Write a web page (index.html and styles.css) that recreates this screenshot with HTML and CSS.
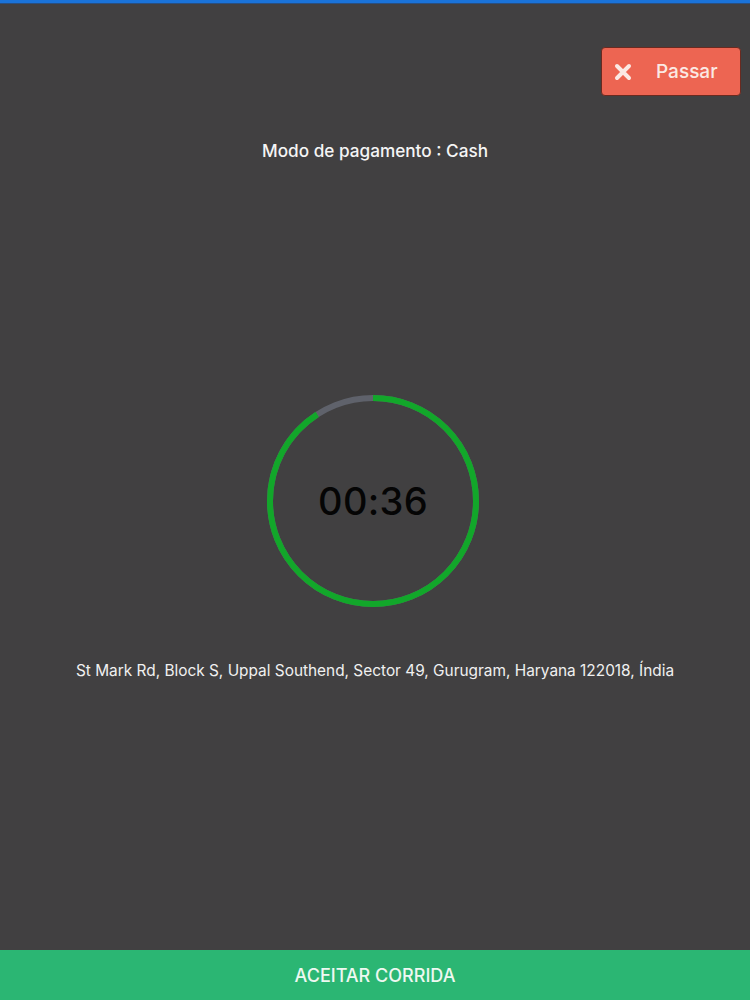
FILE: index.html
```html
<!DOCTYPE html>
<html>
<head>
<meta charset="utf-8">
<link rel="stylesheet" href="styles.css">
</head>
<body>
<div class="screen">
  <div class="topbar"></div>
  <div class="content">
    <div class="skip-row">
      <button class="skip">
        <svg class="x-icon" width="18" height="18" viewBox="0 0 18 18"><path d="M3 3 L15 15 M15 3 L3 15" stroke="#fbe9e4" stroke-width="4" stroke-linecap="round"/></svg>
        <span>Passar</span>
      </button>
    </div>
    <div class="payment">Modo de pagamento : Cash</div>
    <div class="timer">
      <svg class="ring" width="214" height="214" viewBox="0 0 214 214">
        <circle cx="107" cy="107" r="103" fill="none" stroke="#5f626b" stroke-width="6"/>
        <circle cx="107" cy="107" r="103" fill="none" stroke="#12a72a" stroke-width="6" stroke-dasharray="587.5 647.2" transform="rotate(-90 107 107)"/>
      </svg>
      <div class="time">00:36</div>
    </div>
    <div class="address">St Mark Rd, Block S, Uppal Southend, Sector 49, Gurugram, Haryana 122018, Índia</div>
  </div>
  <div class="accept">ACEITAR CORRIDA</div>
</div>
</body>
</html>
```

FILE: styles.css
```css
html, body {
  margin: 0;
  padding: 0;
}
body {
  background: #414041;
  font-family: Inter, "Liberation Sans", Arial, sans-serif;
}
.screen {
  width: 750px;
  height: 1000px;
  display: flex;
  flex-direction: column;
  background: #414041;
}
.topbar {
  height: 3px;
  background: #1a73d9;
  border-bottom: 1px solid #2a4f7f;
}
.content {
  flex: 1;
  display: flex;
  flex-direction: column;
  align-items: center;
}
.skip-row {
  align-self: stretch;
  display: flex;
  justify-content: flex-end;
  padding: 43px 9px 0 0;
}
.skip {
  width: 140px;
  height: 49px;
  box-sizing: border-box;
  background: #ed6552;
  border: 1px solid #6a2a20;
  border-radius: 4px;
  display: flex;
  align-items: center;
  padding: 0 0 0 12px;
  gap: 24px;
  color: #fbe9e4;
  font-family: Inter, "Liberation Sans", Arial, sans-serif;
  font-size: 19px;
  font-weight: 500;
}
.x-icon {
  display: block;
}
.payment {
  margin-top: 44px;
  margin-left: 0;
  color: #f5f5f5;
  font-size: 17.2px;
  font-weight: 500;
  line-height: 22px;
}
.timer {
  position: relative;
  margin-top: 232px;
  margin-left: -4px;
  width: 214px;
  height: 214px;
}
.ring {
  display: block;
}
.time {
  position: absolute;
  inset: 0;
  display: flex;
  align-items: center;
  justify-content: center;
  font-size: 38px;
  font-weight: 500;
  color: #050505;
  letter-spacing: 0.3px;
}
.address {
  margin-top: 52px;
  color: #f0f0f0;
  font-size: 15.4px;
  line-height: 22px;
}
.accept {
  height: 50px;
  background: #2bb673;
  color: #eef8f1;
  display: flex;
  align-items: center;
  justify-content: center;
  font-size: 18px;
  font-weight: 500;
}
```
